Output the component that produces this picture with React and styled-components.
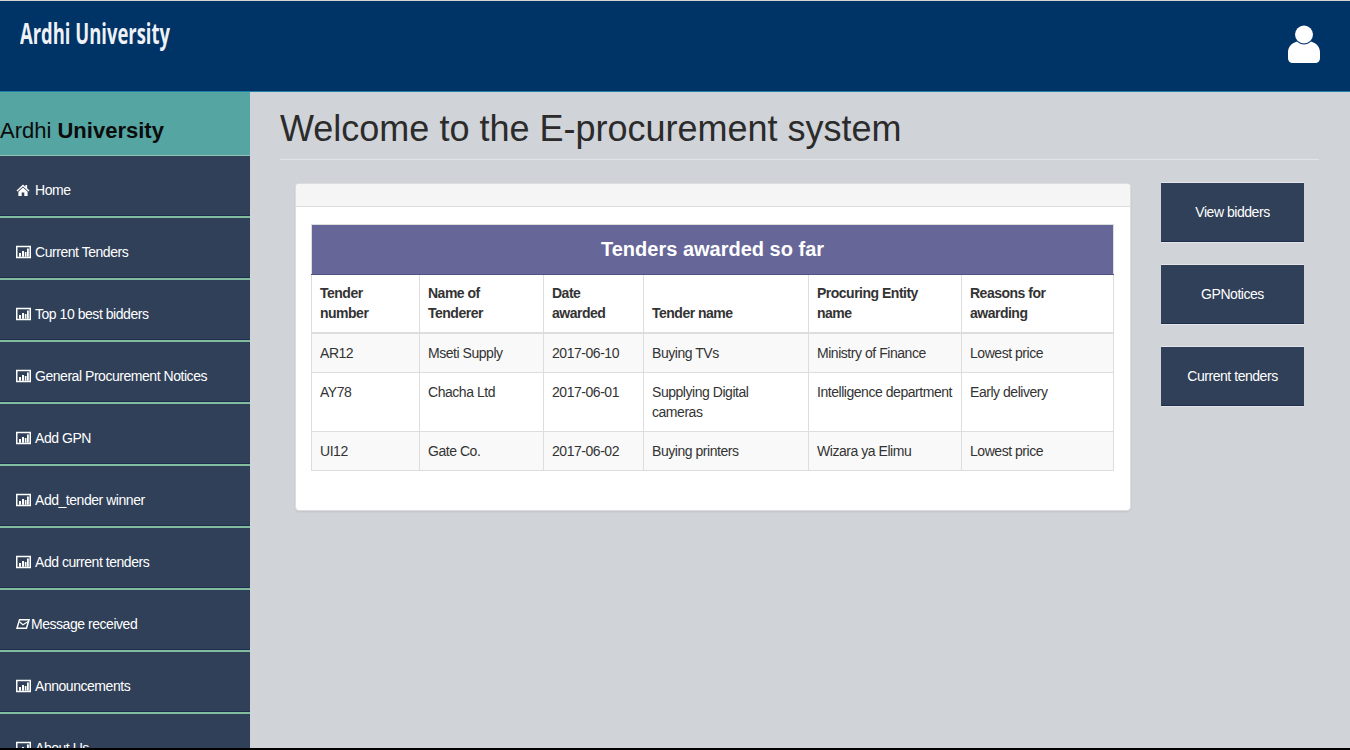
import React from 'react'
import styled, { createGlobalStyle } from 'styled-components'

const GlobalStyle = createGlobalStyle`
  html, body {
    margin: 0;
    padding: 0;
    height: 100%;
    overflow: hidden;
    background: #000;
  }
  * { box-sizing: border-box; }
  body {
    font-family: "Liberation Sans", Arial, sans-serif;
    font-size: 14px;
    letter-spacing: -0.46px;
    color: #333;
  }
`

const Page = styled.div`
  height: 748px;
  display: flex;
  flex-direction: column;
  overflow: hidden;
  background: #d0d3d8;
`

const Header = styled.header`
  flex: 0 0 92px;
  display: flex;
  justify-content: space-between;
  padding: 16px 30px 0 20px;
  background: #003366;
  border-top: 1px solid #d8d4d0;
  border-bottom: 1px solid #1d7fa8;
`

const Logo = styled.div`
  font-family: "Open Sans", sans-serif;
  font-weight: 700;
  font-size: 28px;
  line-height: 32px;
  letter-spacing: 0;
  color: #eef1f5;
  transform: scaleX(0.658);
  transform-origin: left center;
  white-space: nowrap;
`

const UserIcon = styled.svg`
  width: 32px;
  height: 38px;
  margin-top: 8px;
  fill: #fff;
`

const Body = styled.div`
  flex: 1;
  display: flex;
  min-height: 0;
`

const Sidebar = styled.aside`
  flex: 0 0 250px;
  overflow: hidden;
  background: #2f4058;
`

const Brand = styled.div`
  height: 64px;
  padding-top: 25px;
  font-size: 22px;
  line-height: 28px;
  letter-spacing: 0;
  color: #0b0b0b;
  background: #55a5a3;
  border-bottom: 1px solid #8fc4b4;
  white-space: nowrap;

  b { font-weight: 700; }
`

const NavItem = styled.a`
  display: flex;
  align-items: center;
  gap: ${p => p.$gap}px;
  height: 62px;
  padding: 7px 0 0 16px;
  font-size: 14px;
  color: #fff;
  border-bottom: 2px solid #80bd9e;
  box-shadow: inset 0 -1px 0 #1f2c4e;
  white-space: nowrap;
`

const NavIcon = styled.svg`
  flex: none;
  width: ${p => (p.$wide ? '15px' : '14px')};
  height: 14px;
  fill: #fff;
`

const Main = styled.main`
  flex: 1;
  min-width: 0;
  padding: 0 31px 0 30px;
`

const Title = styled.h1`
  margin: 0;
  height: 68px;
  padding-top: 17px;
  font-size: 36px;
  line-height: 40px;
  font-weight: 400;
  letter-spacing: 0;
  color: #2b2b2b;
  border-bottom: 1px solid #e2e4e7;
  white-space: nowrap;
`

const Content = styled.div`
  display: flex;
  align-items: flex-start;
  gap: 30px;
  padding: 22px 15px 0;
`

const Panel = styled.section`
  flex: 0 0 836px;
  height: 328px;
  margin-top: 1px;
  background: #fff;
  border: 1px solid #dddddd;
  border-radius: 4px;
  box-shadow: 0 1px 2px rgba(0, 0, 0, 0.08);
  overflow: hidden;
`

const PanelHead = styled.div`
  height: 23px;
  background: #f5f5f5;
  border-bottom: 1px solid #dddddd;
`

const PanelBody = styled.div`
  padding: 17px 15px;
`

const Table = styled.table`
  width: 802px;
  table-layout: fixed;
  border-collapse: collapse;
  border: 1px solid #dddddd;
  font-size: 14px;
  line-height: 20px;
`

const Caption = styled.th`
  height: 50px;
  padding: 0 0 2px;
  font-size: 20px;
  font-weight: 700;
  letter-spacing: 0;
  text-align: center;
  color: #fff;
  background: #666699;
  border-bottom: 1px solid #4f5285;
`

const HeadCell = styled.th`
  padding: 8px 8px 9px;
  text-align: left;
  vertical-align: bottom;
  font-weight: 700;
  letter-spacing: -0.5px;
  color: #333;
  border: 1px solid #dddddd;
  border-bottom-width: 2px;
`

const Row = styled.tr`
  background: ${p => (p.$striped ? '#f9f9f9' : '#fff')};
`

const Cell = styled.td`
  padding: 9px 8px;
  vertical-align: top;
  border: 1px solid #dddddd;
`

const Actions = styled.div`
  flex: 0 0 143px;
  display: flex;
  flex-direction: column;
  gap: 22px;
`

const ActionButton = styled.a`
  display: flex;
  align-items: center;
  justify-content: center;
  height: 60px;
  font-size: 14px;
  color: #fff;
  background: #2f4058;
  border-top: 1px solid #e2e4e7;
  border-bottom: 1px solid #1f2c4e;
  box-shadow: 0 1px 0 #e2e4e7;
`

const HomeIcon = () => (
  <NavIcon viewBox="0 0 14 14">
    <path d="M7 1.5 0.5 7.4l.9 1L7 3.4l5.6 5 .9-1-2.4-2.2V2h-1.700v1.700z" />
    <path d="M7 4.600 2.400 8.700V13h3.300V9.600h2.600V13h3.300V8.700z" />
  </NavIcon>
)

const StatsIcon = () => (
  <NavIcon $wide viewBox="0 0 15 14">
    <path fillRule="evenodd" d="M0 .8h15v12.400H0zM1.500 2.300v9.400h12V2.300z" />
    <path d="M3 8h2v3.700H3zM6 6h2v5.700H6zM8.800 7h1.700v4.700H8.800zM11 3.500h1.800v8.200H11z" />
  </NavIcon>
)

const MailIcon = () => (
  <NavIcon viewBox="0 0 14 14">
    <path fillRule="evenodd" d="M3 2h11l-3 10H0zM4 3.400 2 10.600h7.900l2.100-7.200z" />
    <path d="M3.800 4.200 7 7l5-3 .1 1.300L6.800 8.600 3.400 5.500z" />
  </NavIcon>
)

const navItems = [
  { label: 'Home', Icon: HomeIcon, gap: 5 },
  { label: 'Current Tenders', Icon: StatsIcon, gap: 4 },
  { label: 'Top 10 best bidders', Icon: StatsIcon, gap: 4 },
  { label: 'General Procurement Notices', Icon: StatsIcon, gap: 4 },
  { label: 'Add GPN', Icon: StatsIcon, gap: 4 },
  { label: 'Add_tender winner', Icon: StatsIcon, gap: 4 },
  { label: 'Add current tenders', Icon: StatsIcon, gap: 4 },
  { label: 'Message received', Icon: MailIcon, gap: 1 },
  { label: 'Announcements', Icon: StatsIcon, gap: 4 },
  { label: 'About Us', Icon: StatsIcon, gap: 4 },
]

const columns = [
  { label: 'Tender number', width: 108 },
  { label: 'Name of Tenderer', width: 124 },
  { label: 'Date awarded', width: 100 },
  { label: 'Tender name', width: 165 },
  { label: 'Procuring Entity name', width: 153 },
  { label: 'Reasons for awarding', width: 152 },
]

const rows = [
  ['AR12', 'Mseti Supply', '2017-06-10', 'Buying TVs', 'Ministry of Finance', 'Lowest price'],
  ['AY78', 'Chacha Ltd', '2017-06-01', 'Supplying Digital cameras', 'Intelligence department', 'Early delivery'],
  ['UI12', 'Gate Co.', '2017-06-02', 'Buying printers', 'Wizara ya Elimu', 'Lowest price'],
]

const App = () => (
  <Page>
    <GlobalStyle />
    <Header>
      <Logo>Ardhi University</Logo>
      <UserIcon viewBox="0 0 32 38">
        <circle cx="16" cy="9.500" r="9" />
        <path d="M9 16.500c2 2 4.500 3 7 3s5-1 7-3c5 1.500 9 5 9 11v5.500c0 3-2 5-5 5H5c-3 0-5-2-5-5v-5.500c0-6 4-9.500 9-11z" />
      </UserIcon>
    </Header>
    <Body>
      <Sidebar>
        <Brand>Ardhi <b>University</b></Brand>
        {navItems.map(({ label, Icon, gap }) => (
          <NavItem key={label} $gap={gap}>
            <Icon />
            {label}
          </NavItem>
        ))}
      </Sidebar>
      <Main>
        <Title>Welcome to the E-procurement system</Title>
        <Content>
          <Panel>
            <PanelHead />
            <PanelBody>
              <Table>
                <colgroup>
                  {columns.map(c => <col key={c.label} width={c.width} />)}
                </colgroup>
                <thead>
                  <tr><Caption colSpan={6}>Tenders awarded so far</Caption></tr>
                  <tr>
                    {columns.map(c => <HeadCell key={c.label}>{c.label}</HeadCell>)}
                  </tr>
                </thead>
                <tbody>
                  {rows.map((row, i) => (
                    <Row key={row[0]} $striped={i % 2 === 0}>
                      {row.map(value => <Cell key={value}>{value}</Cell>)}
                    </Row>
                  ))}
                </tbody>
              </Table>
            </PanelBody>
          </Panel>
          <Actions>
            <ActionButton>View bidders</ActionButton>
            <ActionButton>GPNotices</ActionButton>
            <ActionButton>Current tenders</ActionButton>
          </Actions>
        </Content>
      </Main>
    </Body>
  </Page>
)

export default App
